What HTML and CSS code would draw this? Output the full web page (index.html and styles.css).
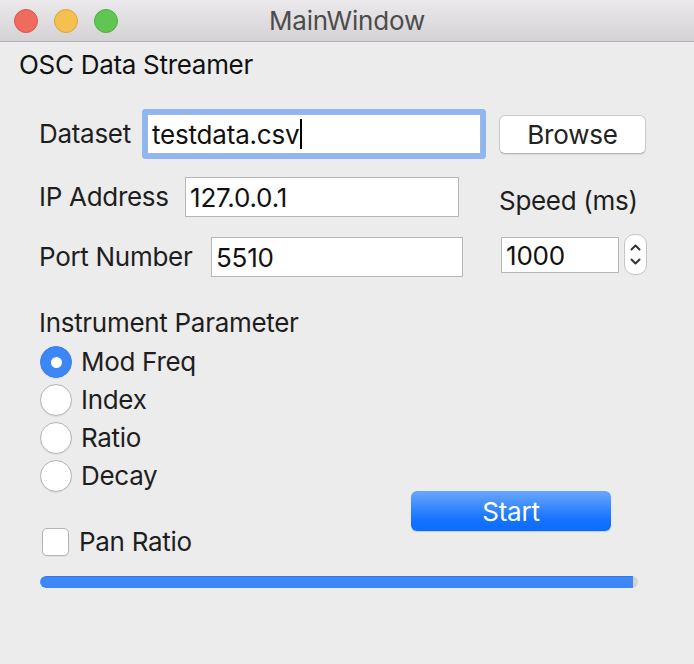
FILE: index.html
```html
<!DOCTYPE html>
<html>
<head>
<meta charset="utf-8">
<title>MainWindow</title>
<link rel="stylesheet" href="styles.css">
</head>
<body>
<div class="window">
  <div class="titlebar">
    <div class="lights">
      <span class="light red"></span>
      <span class="light yellow"></span>
      <span class="light green"></span>
    </div>
    <div class="title">MainWindow</div>
    <div></div>
  </div>
  <div class="content">
    <div class="app-title">OSC Data Streamer</div>
    <div class="form">
      <div class="row row-1">
        <div class="left">
          <span class="label label-dataset">Dataset</span>
          <div class="field field-dataset focused"><span>testdata.csv</span><span class="caret"></span></div>
        </div>
        <button class="btn-browse">Browse</button>
      </div>
      <div class="row row-2">
        <div class="left">
          <span class="label label-ip">IP Address</span>
          <div class="field field-ip"><span>127.0.0.1</span></div>
        </div>
        <span class="label speed">Speed (ms)</span>
      </div>
      <div class="row row-3">
        <div class="left">
          <span class="label label-port">Port Number</span>
          <div class="field field-port"><span>5510</span></div>
        </div>
        <div class="spin">
          <div class="field field-spin"><span>1000</span></div>
          <div class="stepper">
            <svg width="23" height="41" viewBox="0 0 23 41">
              <path d="M7.5 15.5 L11.5 11.5 L15.5 15.5" fill="none" stroke="#333" stroke-width="2" stroke-linecap="round" stroke-linejoin="round"/>
              <path d="M7.5 25.5 L11.5 29.5 L15.5 25.5" fill="none" stroke="#333" stroke-width="2" stroke-linecap="round" stroke-linejoin="round"/>
            </svg>
          </div>
        </div>
      </div>
      <div class="lower">
        <div class="lower-left">
          <div class="label section">Instrument Parameter</div>
          <div class="radio-group">
            <div class="radio-row"><span class="radio checked"></span><span class="label">Mod Freq</span></div>
            <div class="radio-row"><span class="radio"></span><span class="label">Index</span></div>
            <div class="radio-row"><span class="radio"></span><span class="label">Ratio</span></div>
            <div class="radio-row"><span class="radio"></span><span class="label">Decay</span></div>
          </div>
          <div class="check-row"><span class="checkbox"></span><span class="label">Pan Ratio</span></div>
        </div>
        <div class="lower-right">
          <button class="btn-start">Start</button>
        </div>
      </div>
      <div class="progress"><div class="progress-fill" style="width: 99.2%"></div></div>
    </div>
  </div>
</div>
</body>
</html>
```

FILE: styles.css
```css
* { box-sizing: border-box; }
html, body { margin: 0; padding: 0; }
body {
  width: 694px;
  height: 664px;
  overflow: hidden;
  background: #ececec;
  font-family: "Inter", "Liberation Sans", sans-serif;
  font-size: 26px;
  color: #1e1e1e;
}
.window { width: 694px; height: 664px; background: #ececec; }

.titlebar {
  height: 42px;
  display: grid;
  grid-template-columns: 1fr auto 1fr;
  align-items: center;
  background: linear-gradient(#ebe9eb, #d4d2d4);
  border-bottom: 1px solid #b3b1b3;
}
.lights { display: flex; gap: 16px; padding-left: 14px; }
.light { width: 24px; height: 24px; border-radius: 50%; display: block; }
.red { background: #ef6b60; border: 1px solid #d9574c; }
.yellow { background: #f6c04f; border: 1px solid #dea23d; }
.green { background: #61c554; border: 1px solid #4fae41; }
.title { color: #4c4c4c; font-size: 26px; line-height: 30px; letter-spacing: -0.2px; }

.content { padding-left: 19px; }
.app-title { margin-top: 8px; line-height: 30px; letter-spacing: -0.3px; color: #111; }

.form { padding-left: 20px; }
.row { display: grid; grid-template-columns: 460px auto; align-items: start; height: 40px; }
.row-1 { margin-top: 34px; }
.row-2 { margin-top: 23px; }
.row-3 { margin-top: 20px; }
.left { display: flex; align-items: center; height: 40px; }
.label { line-height: 30px; letter-spacing: -0.3px; white-space: nowrap; }
.label-dataset { width: 108px; }
.label-ip { width: 146px; }
.label-port { width: 172px; }

.field {
  height: 40px;
  background: #fff;
  border: 1px solid #b7b7b7;
  padding-left: 4px;
  display: flex;
  align-items: center;
  color: #111;
  letter-spacing: -0.2px;
}
.field-dataset { width: 334px; }
.field-ip { width: 274px; }
.field-port { width: 252px; }
.focused {
  border-color: #9fb9de;
  box-shadow: 0 0 0 5px #8fb6ee;
  border-radius: 1px;
}
.caret { width: 2px; height: 30px; background: #000; margin-left: 1px; }

.btn-browse {
  margin-top: 1px;
  width: 147px;
  height: 39px;
  border: 1px solid #cacaca;
  border-bottom-color: #b5b5b5;
  border-radius: 6px;
  background: #fff;
  font-family: inherit;
  font-size: 26px;
  color: #222;
  letter-spacing: -0.2px;
  padding: 0;
  box-shadow: 0 1px 1px rgba(0,0,0,0.08);
}
.speed { padding-top: 9px; display: block; line-height: 30px; }

.spin { display: flex; align-items: center; margin-left: 2px; gap: 5px; height: 40px; }
.field-spin { width: 118px; height: 36px; margin-top: 0; align-self: flex-start; }
.stepper {
  width: 23px;
  height: 41px;
  margin-top: -3px;
  align-self: flex-start;
  background: #fff;
  border: 1px solid #c4c4c4;
  border-radius: 10px;
  display: flex;
  overflow: hidden;
}
.stepper svg { margin: -1px; }

.lower { display: flex; margin-top: 31px; }
.lower-left { width: 372px; }
.section { display: block; }
.radio-group { margin-top: 5px; }
.radio-row { display: flex; align-items: center; height: 38px; }
.radio {
  width: 32px;
  height: 32px;
  border-radius: 50%;
  background: #fff;
  border: 1px solid #b4b4b4;
  margin-left: 1px;
  margin-right: 9px;
  box-shadow: 0 1px 1px rgba(0,0,0,0.06);
  display: flex;
  align-items: center;
  justify-content: center;
}
.radio.checked { background: #3c86f6; border-color: #3a7fe8; }
.radio.checked::after {
  content: "";
  width: 11px;
  height: 11px;
  border-radius: 50%;
  background: #fff;
}
.check-row { display: flex; align-items: center; height: 38px; margin-top: 28px; }
.checkbox {
  width: 27px;
  height: 28px;
  margin-left: 3px;
  margin-right: 10px;
  background: #fff;
  border: 1px solid #b4b4b4;
  border-radius: 5px;
  box-shadow: 0 1px 1px rgba(0,0,0,0.06);
}
.lower-right { padding-top: 183px; }
.btn-start {
  width: 200px;
  height: 40px;
  border: none;
  border-radius: 6px;
  background: linear-gradient(#6aa7fb, #1773fe 70%, #0a6cff);
  color: #fff;
  font-family: inherit;
  font-size: 26px;
  letter-spacing: -0.2px;
  padding: 0;
  box-shadow: 0 1px 1px rgba(0,0,0,0.15);
}

.progress {
  margin-top: 15px;
  margin-left: 1px;
  width: 598px;
  height: 12px;
  border-radius: 6px;
  background: #d3d3d3;
  overflow: hidden;
}
.progress-fill {
  height: 12px;
  background: #3d87f8;
  border-top: 1px solid #3478e6;
  border-radius: 6px 0 0 6px;
}
```
